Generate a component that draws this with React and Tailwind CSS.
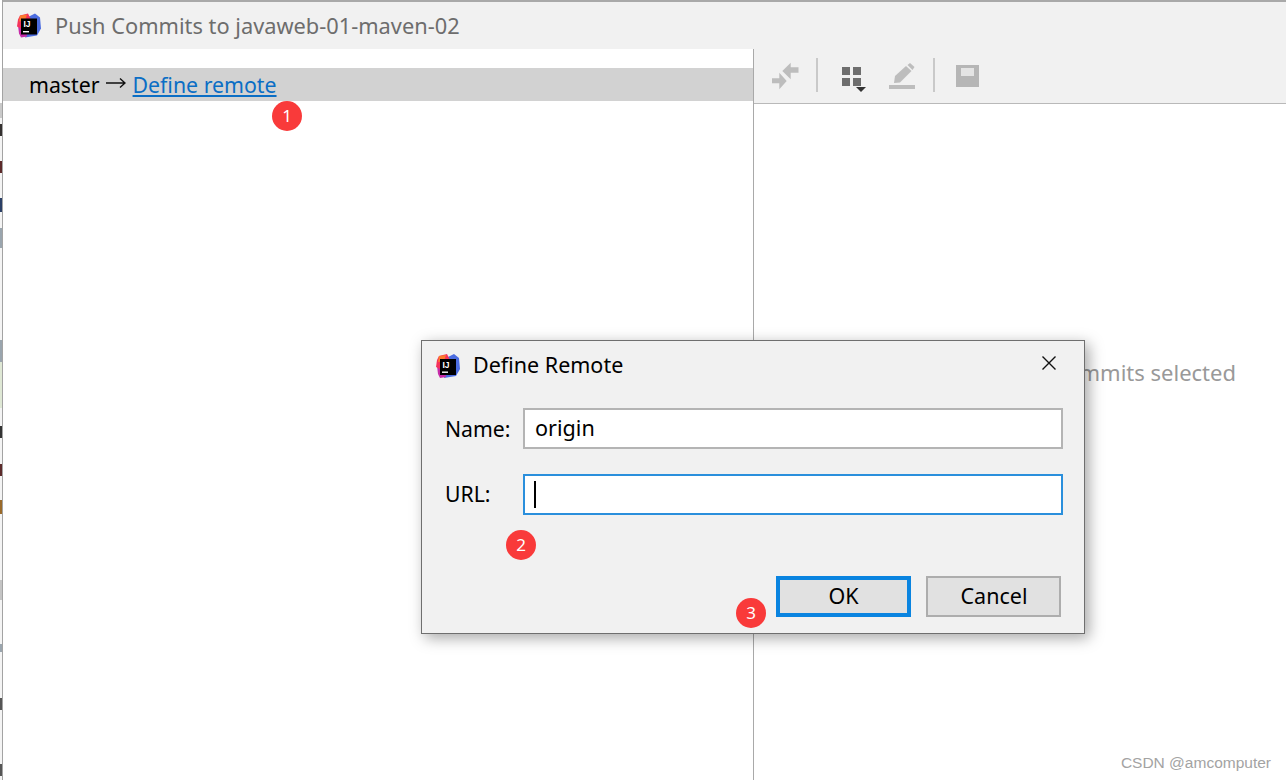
const font = { fontFamily: '"Noto Sans", sans-serif' };

const IdeaLogo = ({ className }) => (
  <svg viewBox="0 0 24 24" className={className}>
    <polygon points="12,3 18,0 23,4 24,15 20,22 8,24" fill="#4c6de0" />
    <polygon points="1,12 8,10 10,23 4,24 2,20" fill="#c62ba8" />
    <polygon points="3,2 11,0 14,6 4,15 0,13 1,6" fill="#f5325b" />
    <polygon points="3,2 10,1 8,7 2,8" fill="#fc7a2c" />
    <rect x="4" y="5" width="16" height="16" fill="#000" />
    <text x="6.5" y="13.5" fill="#fff" fontSize="8.5" fontWeight="700" fontFamily="Liberation Sans, sans-serif">IJ</text>
    <rect x="6" y="17.5" width="6" height="1.4" fill="#fff" />
  </svg>
);

const Toolbar = () => (
  <div className="h-[55px] shrink-0 bg-[#f1f1f1] border-b border-[#b9b9b9] flex items-start">
    <svg viewBox="0 0 27 28" className="w-[27px] h-[28px] ml-[18px] mt-[13px]" fill="#bdbdbd">
      <polygon points="10.3,9 18.7,0.7 18.7,5.3 26.5,5.3 26.5,10.7 18.7,10.7 18.7,17.3" />
      <polygon points="14.7,19 7.3,10.7 7.3,16.3 0,16.3 0,21.3 7.3,21.3 7.3,27.3" />
    </svg>
    <div className="w-[2px] h-[34px] bg-[#c9c9c9] ml-[17px] mt-[9px]" />
    <div className="ml-[24px] mt-[18px] relative w-[23px] h-[28px]">
      <div className="grid grid-cols-2 gap-[3px] w-[19px]">
        <div className="h-[8px] bg-[#6e6e6e]" />
        <div className="h-[8px] bg-[#6e6e6e]" />
        <div className="h-[8px] bg-[#6e6e6e]" />
        <div className="h-[8px] bg-[#6e6e6e]" />
      </div>
      <div className="absolute left-[14px] top-[20px] border-x-[5px] border-t-[5px] border-x-transparent border-t-[#333]" />
    </div>
    <svg viewBox="0 0 27 28" className="w-[27px] h-[28px] ml-[24px] mt-[13px]" fill="#bdbdbd">
      <polygon points="5,21 6,14 17,4 22.5,9 11,20.5" />
      <polygon points="18.5,3 21,1 25.5,5 23.5,8" />
      <rect x="0" y="23" width="26" height="4" />
    </svg>
    <div className="w-[2px] h-[34px] bg-[#c9c9c9] ml-[17px] mt-[9px]" />
    <div className="ml-[21px] mt-[16px] w-[23px] h-[22px] bg-[#b6b6b6] pt-[3px] px-[5px]">
      <div className="h-[8px] bg-[#e4e4e4]" />
    </div>
  </div>
);

const Badge = ({ n, className }) => (
  <div
    style={font}
    className={`absolute w-[30px] h-[30px] rounded-full bg-[#f93a3a] text-white text-[17px] leading-[30px] text-center ${className}`}
  >
    {n}
  </div>
);

const Dialog = () => (
  <div className="absolute left-[421px] top-[340px] w-[664px] h-[294px] bg-[#f1f1f1] border border-[#6f6f6f] shadow-[4px_4px_14px_rgba(0,0,0,0.35)]">
    <div className="h-[50px] flex items-center pl-[14px] pr-[28px]">
      <IdeaLogo className="w-[24px] h-[24px]" />
      <span className="ml-[13px] mb-[1px] text-[21.5px] text-black">Define Remote</span>
      <svg viewBox="0 0 14 14" className="w-[14px] h-[14px] ml-auto mb-[6px]" fill="none" stroke="#111" strokeWidth="1.4">
        <path d="M0.5 0.5l13 13M13.5 0.5l-13 13" />
      </svg>
    </div>
    <div className="mt-[17px] pl-[23px] flex items-center h-[41px]">
      <span className="w-[78px] text-[21.2px] text-black">Name:</span>
      <div className="w-[540px] h-[41px] bg-white border-2 border-[#b4b4b4] pl-[10px] text-[21.6px] leading-[35px] text-black">origin</div>
    </div>
    <div className="mt-[25px] pl-[23px] flex items-center h-[41px]">
      <span className="w-[78px] mb-[1px] text-[21.2px] text-black">URL:</span>
      <div className="w-[540px] h-[41px] bg-white border-2 border-[#2a8fdc] pl-[9px] pt-[5px]">
        <div className="w-[2px] h-[27px] bg-black" />
      </div>
    </div>
    <div className="mt-[61px] pl-[354px] flex items-start">
      <button className="w-[135px] h-[41px] bg-[#e1e1e1] border-4 border-[#0a84e0] pb-[2px] text-[21.5px] leading-[29px] text-black">OK</button>
      <button className="ml-[15px] w-[135px] h-[41px] bg-[#e1e1e1] border-2 border-[#adadad] pl-[1px] pb-[2px] text-[21.5px] leading-[33px] text-black">Cancel</button>
    </div>
  </div>
);

const LeftStrip = () => (
  <div className="w-[3px] shrink-0 h-full border-r border-[#a3a3a3] bg-[#f4f4f4] flex flex-col">
    <div className="h-[103px] bg-white" />
    <div className="h-[15px] bg-[#c9c9c9]" />
    <div className="h-[12px] mt-[6px] bg-[#33302f]" />
    <div className="h-[12px] mt-[25px] bg-[#5c2a2a]" />
    <div className="h-[14px] mt-[25px] bg-[#2b3f66]" />
    <div className="h-[20px] mt-[16px] bg-[#9aa5ae]" />
    <div className="h-[22px] mt-[92px] bg-[#9aa5ae]" />
    <div className="h-[46px] bg-[#dfe8d5]" />
    <div className="h-[12px] mt-[18px] bg-[#333]" />
    <div className="h-[12px] mt-[26px] bg-[#5c2a2a]" />
    <div className="h-[14px] mt-[24px] bg-[#9a6a2a]" />
    <div className="h-[20px] mt-[66px] bg-[#c4c4c4]" />
    <div className="h-[8px] mt-[44px] bg-[#9aa5ae]" />
    <div className="h-[12px] mt-[46px] bg-[#555]" />
    <div className="h-[12px] mt-[54px] bg-[#555]" />
  </div>
);

export default function App() {
  return (
    <div style={font} className="relative w-[1286px] h-[780px] overflow-hidden bg-white flex">
      <LeftStrip />
      <div className="flex-1 min-w-0 flex flex-col">
        <div className="h-[2px] shrink-0 bg-[#a9a9a9]" />
        <div className="h-[47px] shrink-0 bg-[#f1f1f1] flex items-center pl-[14px]">
          <IdeaLogo className="w-[24px] h-[25px]" />
          <span className="ml-[14px] mt-[2px] text-[21.8px] text-[#6d6d6d]">Push Commits to javaweb-01-maven-02</span>
        </div>
        <div className="flex-1 flex min-h-0">
          <div className="w-[750px] shrink-0 pt-[19px]">
            <div className="h-[33px] bg-[#d2d2d2] pl-[26px] flex items-center text-[21.3px] text-black">
              <span>master</span>
              <svg viewBox="0 0 20 12" className="w-[20px] h-[12px] ml-[6px] mb-[3px]" fill="none" stroke="#111" strokeWidth="1.4">
                <path d="M0 6h19M14 1.5l5 4.5-5 4.5" />
              </svg>
              <a className="ml-[7px] text-[#0b6ec5] underline">Define remote</a>
            </div>
          </div>
          <div className="flex-1 border-l border-[#a9a9a9] flex flex-col">
            <Toolbar />
            <div className="flex-1 flex justify-end pr-[50px] pt-[252px]">
              <span className="text-[22px] leading-[32px] text-[#999]">No commits selected</span>
            </div>
          </div>
        </div>
      </div>
      <Dialog />
      <Badge n="1" className="left-[272px] top-[101px]" />
      <Badge n="2" className="left-[506px] top-[530px]" />
      <Badge n="3" className="left-[736px] top-[598px]" />
      <span className="absolute right-[15px] bottom-[6px] text-[15.5px] text-[#a3a3a3]" style={{ fontFamily: '"Liberation Sans", sans-serif' }}>
        CSDN @amcomputer
      </span>
    </div>
  );
}
